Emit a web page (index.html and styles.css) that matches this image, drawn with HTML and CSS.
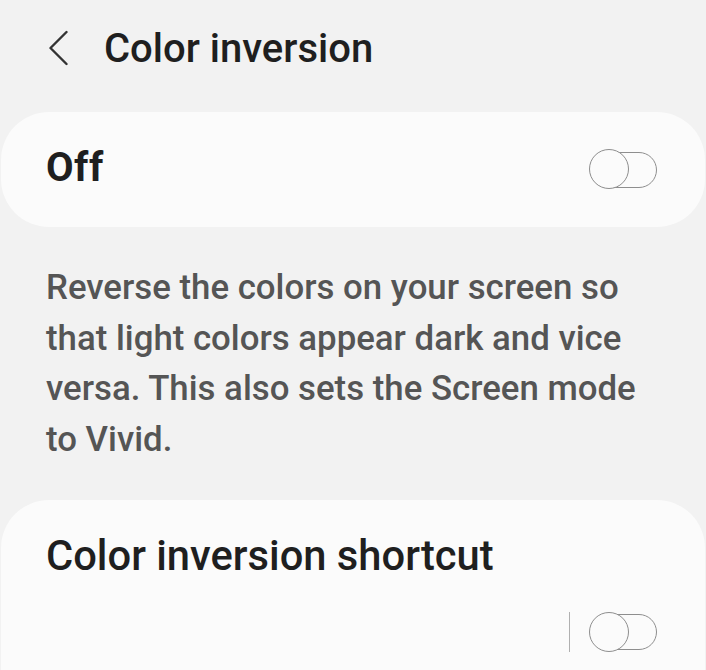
FILE: index.html
```html
<!DOCTYPE html>
<html>
<head>
<meta charset="utf-8">
<link rel="stylesheet" href="styles.css">
</head>
<body>
<div class="screen">
  <header class="topbar">
    <svg class="back" width="20" height="36" viewBox="0 0 20 36"><path d="M18.5 2 L2.5 18 L18.5 34" fill="none" stroke="#333" stroke-width="2.4" stroke-linecap="round" stroke-linejoin="round"/></svg>
    <h1 class="title">Color inversion</h1>
  </header>
  <section class="card card-main">
    <span class="main-label">Off</span>
    <span class="switch"><span class="thumb"></span></span>
  </section>
  <p class="desc">Reverse the colors on your screen so that light colors appear dark and vice versa. This also sets the Screen mode to Vivid.</p>
  <section class="card card-shortcut">
    <div class="item-title">Color inversion shortcut</div>
    <div class="item-ctrl">
      <span class="divider"></span>
      <span class="switch"><span class="thumb"></span></span>
    </div>
  </section>
</div>
</body>
</html>
```
FILE: styles.css
```css
* { box-sizing: border-box; }
html, body { margin: 0; padding: 0; }
body {
  background: #f2f2f2;
  font-family: Roboto, "Noto Sans", sans-serif;
  color: #1f1f1f;
  width: 706px;
  height: 670px;
  overflow: hidden;
}
.screen {
  display: flex;
  flex-direction: column;
  padding: 0 1px;
}
.topbar {
  display: flex;
  align-items: center;
  height: 96px;
  padding-left: 47px;
  gap: 36px;
}
.back { flex: none; }
.title {
  margin: 0;
  font-size: 40px;
  font-weight: 500;
  line-height: normal;
  color: #1f1f1f;
}
.card {
  background: #fbfbfb;
  border-radius: 48px;
}
.card-main {
  margin-top: 16px;
  height: 115px;
  display: flex;
  align-items: center;
  justify-content: space-between;
  padding: 0 48px 0 45px;
}
.main-label {
  font-size: 40px;
  font-weight: 700;
  letter-spacing: 0.5px;
  line-height: normal;
  margin-bottom: 4px;
  color: #1f1f1f;
}
.switch {
  position: relative;
  width: 67px;
  height: 36px;
  border: 1.6px solid #8e8e8e;
  border-radius: 18px;
  display: block;
}
.thumb {
  position: absolute;
  left: -2px;
  top: -3.5px;
  width: 40px;
  height: 40px;
  border: 1.6px solid #8e8e8e;
  border-radius: 50%;
  background: #fbfbfb;
}
.desc {
  margin: 35px 0 0 0;
  padding: 0 45px;
  font-size: 34.8px;
  font-weight: 500;
  line-height: 50.5px;
  color: #555;
}
.card-shortcut {
  margin-top: 36px;
  height: 172px;
  border-radius: 48px 48px 0 0;
  padding: 32px 48px 0 45px;
}
.item-title {
  font-size: 41.7px;
  font-weight: 500;
  color: #1f1f1f;
  line-height: 48px;
}
.item-ctrl {
  display: flex;
  justify-content: flex-end;
  align-items: center;
  gap: 20px;
  margin-top: 32px;
}
.divider {
  width: 1.5px;
  height: 40px;
  background: #b0b0b0;
}
```
